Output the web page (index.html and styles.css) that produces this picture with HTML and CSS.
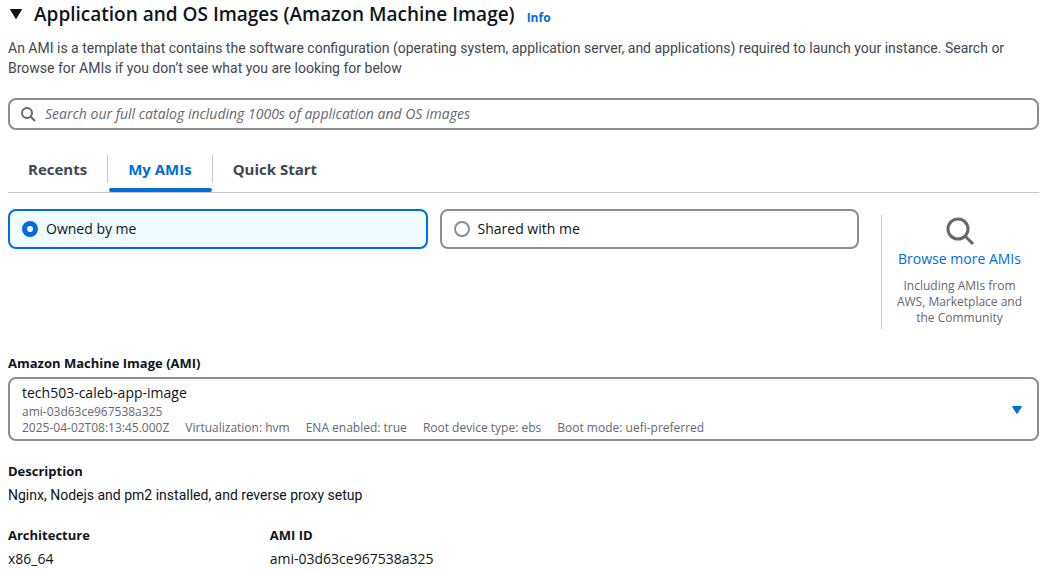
FILE: index.html
```html
<!DOCTYPE html>
<html lang="en">
<head>
<meta charset="utf-8">
<meta name="viewport" content="width=device-width, initial-scale=1">
<title>Application and OS Images</title>
<link rel="stylesheet" href="styles.css">
</head>
<body>
<main class="panel">
  <header class="header">
    <h2 class="title">
      <button class="toggle" type="button" aria-expanded="true">
        <svg class="toggle-icon" viewBox="0 0 16 16" aria-hidden="true"><path d="M2.500 3.500h11L8 12.500z" fill="currentColor" stroke="currentColor" stroke-width="1" stroke-linejoin="round"/></svg>
        <span>Application and OS Images (Amazon Machine Image)</span>
      </button>
    </h2>
    <a class="info" href="#">Info</a>
  </header>
  <p class="intro">An AMI is a template that contains the software configuration (operating system, application server, and applications) required to launch your instance. Search or Browse for AMIs if you don’t see what you are looking for below</p>

  <label class="search">
    <svg class="search-icon" viewBox="0 0 16 16" aria-hidden="true"><circle cx="7" cy="7" r="5" fill="none" stroke="currentColor" stroke-width="2"/><path d="M10.500 10.500 15 15" stroke="currentColor" stroke-width="2"/></svg>
    <input class="search-input" type="search" aria-label="Search images" placeholder="Search our full catalog including 1000s of application and OS images">
  </label>

  <div class="tabs" role="tablist">
    <button class="tab" type="button" role="tab" aria-selected="false"><span class="tab-label">Recents</span></button>
    <button class="tab tab-active" type="button" role="tab" aria-selected="true"><span class="tab-label">My AMIs</span></button>
    <button class="tab" type="button" role="tab" aria-selected="false"><span class="tab-label">Quick Start</span></button>
  </div>

  <div class="source">
    <div class="tiles" role="radiogroup" aria-label="AMI owner">
      <label class="tile"><input class="radio" type="radio" name="owner" checked><span>Owned by me</span></label>
      <label class="tile"><input class="radio" type="radio" name="owner"><span>Shared with me</span></label>
    </div>
    <aside class="browse">
      <svg class="browse-icon" viewBox="0 0 32 32" aria-hidden="true"><circle cx="14" cy="14" r="10" fill="none" stroke="currentColor" stroke-width="3"/><path d="M21 21l8 8" stroke="currentColor" stroke-width="3"/></svg>
      <a class="browse-link" href="#">Browse more AMIs</a>
      <p class="browse-note">Including AMIs from AWS, Marketplace and the Community</p>
    </aside>
  </div>

  <div class="field">
    <span class="label" id="ami-label">Amazon Machine Image (AMI)</span>
    <button class="select" type="button" aria-haspopup="listbox" aria-labelledby="ami-label ami-value">
      <span class="option" id="ami-value">
        <span class="option-name">tech503-caleb-app-image</span>
        <span class="option-meta">ami-03d63ce967538a325</span>
        <span class="option-meta option-tags">
          <span>2025-04-02T08:13:45.000Z</span>
          <span>Virtualization: hvm</span>
          <span>ENA enabled: true</span>
          <span>Root device type: ebs</span>
          <span>Boot mode: uefi-preferred</span>
        </span>
      </span>
      <svg class="caret" viewBox="0 0 16 16" aria-hidden="true"><path d="M3.500 4.500h9L8 11.500z" fill="currentColor" stroke="currentColor" stroke-width="1" stroke-linejoin="round"/></svg>
    </button>
  </div>

  <dl class="details">
    <div class="detail detail-wide"><dt class="label">Description</dt><dd class="value">Nginx, Nodejs and pm2 installed, and reverse proxy setup</dd></div>
    <div class="detail"><dt class="label">Architecture</dt><dd class="value">x86_64</dd></div>
    <div class="detail"><dt class="label">AMI ID</dt><dd class="value">ami-03d63ce967538a325</dd></div>
  </dl>
</main>
</body>
</html>
```
FILE: styles.css
```css
* { box-sizing: border-box; }
body {
  margin: 0;
  background: #fff;
  color: #0f141a;
  font: 14px/20px "Open Sans", "Noto Sans", sans-serif;
}
button, input { font: inherit; color: inherit; }
a { color: #006ce0; text-decoration: none; }
p, h2, dl, dd { margin: 0; }

.panel { padding: 2px 7px 0 8px; }

.header { display: flex; align-items: baseline; gap: 12px; }
.title { font-size: 19px; line-height: 24px; font-weight: 600; }
.toggle {
  display: flex;
  align-items: center;
  gap: 10px;
  padding: 0;
  border: 0;
  background: none;
  text-align: left;
}
.toggle-icon { width: 16px; height: 16px; flex: none; }
.info { font-size: 12px; font-weight: 700; }
.intro {
  margin-top: 10px;
  color: #424650;
  font-family: Roboto, "Open Sans", sans-serif;
}

.search {
  display: flex;
  align-items: center;
  gap: 9px;
  height: 32px;
  margin-top: 20px;
  padding: 0 10px;
  border: 2px solid #8c8c94;
  border-radius: 8px;
}
.search-icon { width: 16px; height: 16px; flex: none; color: #656871; }
.search-input { flex: 1; min-width: 0; padding: 0; border: 0; outline: 0; background: none; }
.search-input::placeholder { color: #656871; font-style: italic; opacity: 1; }

.tabs { display: flex; margin-top: 21px; border-bottom: 1px solid #c6c6cd; }
.tab {
  display: flex;
  padding: 4px 0 5px;
  border: 0;
  border-bottom: 4px solid transparent;
  background: none;
  color: #424650;
  font-size: 15px;
  font-weight: 700;
  position: relative;
}
.tab-label { padding: 4px 20px; border-right: 1px solid #c6c6cd; }
.tab:last-child .tab-label { border-right: 0; }
.tab-active { color: #006ce0; }
.tab-active::after {
  content: "";
  position: absolute;
  left: 1px;
  right: 1px;
  bottom: -4px;
  height: 4px;
  border-radius: 2px;
  background: #006ce0;
}

.source { display: flex; gap: 22px; margin-top: 16px; }
.tiles { flex: 1; display: grid; grid-template-columns: 1fr 1fr; gap: 12px; align-items: start; }
.tile {
  display: flex;
  align-items: center;
  gap: 8px;
  padding: 8px 12px;
  border: 2px solid #8c8c94;
  border-radius: 8px;
}
.tile:has(.radio:checked) { border-color: #006ce0; background: #f0fbff; }
.radio {
  appearance: none;
  flex: none;
  width: 16px;
  height: 16px;
  margin: 0;
  border: 2px solid #8c8c94;
  border-radius: 50%;
  background: #fff;
}
.radio:checked { border: 5px solid #006ce0; }

.browse {
  display: flex;
  flex-direction: column;
  align-items: center;
  width: 158px;
  margin-top: 6px;
  padding: 0 14px 3px 12px;
  border-left: 1px solid #c6c6cd;
  text-align: center;
}
.browse-icon { width: 32px; height: 32px; color: #656871; }
.browse-link { margin-top: 2px; white-space: nowrap; }
.browse-note { margin-top: 9px; font-size: 12px; line-height: 16px; color: #656871; }

.field { display: flex; flex-direction: column; gap: 4px; margin-top: 24px; }
.label { font-size: 13px; font-weight: 700; }
.select {
  display: flex;
  align-items: center;
  justify-content: space-between;
  gap: 12px;
  padding: 4px 12px 3px;
  border: 2px solid #8c8c94;
  border-radius: 8px;
  background: #fff;
  text-align: left;
}
.option { display: flex; flex-direction: column; }
.option-name { margin-bottom: 1px; }
.option-meta { font-size: 12px; line-height: 16px; color: #656871; }
.option-tags { display: flex; flex-wrap: wrap; column-gap: 16px; }
.caret { width: 16px; height: 16px; flex: none; color: #006ce0; }

.details {
  display: grid;
  grid-template-columns: repeat(4, 1fr);
  gap: 20px 16px;
  margin-top: 20px;
}
.detail-wide { grid-column: 1 / -1; }
.value { margin-top: 4px; }
.detail-wide .value { font-family: Roboto, "Open Sans", sans-serif; }
```
